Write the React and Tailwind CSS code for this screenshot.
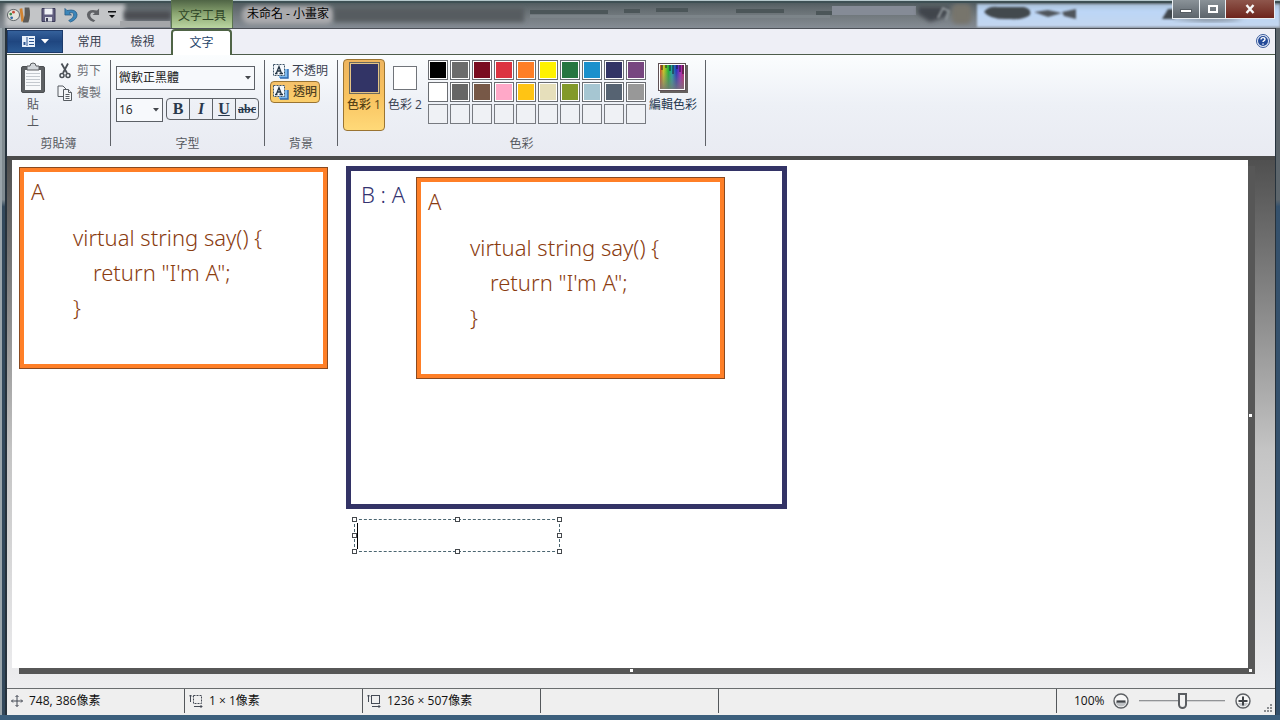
import React from "react";

const PALETTE = [
  { name: "黑色", fill: "bg-[#000000]" },
  { name: "深灰", fill: "bg-[#6b6b6b]" },
  { name: "深紅", fill: "bg-[#7a0c20]" },
  { name: "紅色", fill: "bg-[#dc3340]" },
  { name: "橙色", fill: "bg-[#ff7f27]" },
  { name: "黃色", fill: "bg-[#fff200]" },
  { name: "綠色", fill: "bg-[#27763f]" },
  { name: "青綠", fill: "bg-[#1a90cc]" },
  { name: "靛藍", fill: "bg-[#323466]" },
  { name: "紫色", fill: "bg-[#774680]" },
  { name: "白色", fill: "bg-[#ffffff]" },
  { name: "灰色", fill: "bg-[#666666]" },
  { name: "棕色", fill: "bg-[#775847]" },
  { name: "玫瑰", fill: "bg-[#ffa8c8]" },
  { name: "金色", fill: "bg-[#ffc414]" },
  { name: "淺黃", fill: "bg-[#e6dfbb]" },
  { name: "萊姆", fill: "bg-[#82992a]" },
  { name: "淺青", fill: "bg-[#a6c6d2]" },
  { name: "藍灰", fill: "bg-[#566372]" },
  { name: "淡紫", fill: "bg-[#989898]" },
];

function Group({ label, className, children }) {
  return (
    <section
      aria-label={label}
      className={"flex h-[86px] flex-col border-r border-[#5f6268] " + className}
    >
      <div className="flex h-[76px] flex-none">{children}</div>
      <div className="h-4 flex-none text-center text-xs leading-4 text-[#55585e]">{label}</div>
    </section>
  );
}

function Chevron() {
  return (
    <svg viewBox="0 0 6 4" className="pointer-events-none absolute right-1 top-1/2 h-1 w-1.5 -translate-y-1/2" fill="#44474c">
      <path d="M0 0h6L3 3.6z" />
    </svg>
  );
}

function TextBackIcon() {
  return (
    <svg viewBox="0 0 17 16" className="h-4 w-[17px] flex-none">
      <path d="M9 6h7v9H7v-3z" fill="#7db9ee" />
      <path d="M8 15h8V6" fill="none" stroke="#2a66ad" strokeWidth="1.4" />
      <rect x="1.500" y="1.500" width="11" height="11" fill="#f4f8fc" stroke="#3f5568" strokeDasharray="2 1" />
      <path d="M3 10.500h2.500M7.500 10.500H11M4.300 10.500L7 3.500l2.500 7M5.400 8h3.200" fill="none" stroke="#253646" strokeWidth="1.300" />
    </svg>
  );
}

function TitleBackdrop() {
  return (
    <svg aria-hidden="true" viewBox="0 0 1280 28" preserveAspectRatio="none" className="absolute inset-0 h-full w-full">
      <defs>
        <filter id="soft" x="-20%" y="-50%" width="140%" height="200%">
          <feGaussianBlur stdDeviation="2" />
        </filter>
        <filter id="faint" x="-10%" y="-30%" width="120%" height="160%">
          <feGaussianBlur stdDeviation="0.8" />
        </filter>
        <linearGradient id="glass" x1="0" y1="0" x2="0" y2="1">
          <stop offset="0" stopColor="#475458" />
          <stop offset="0.25" stopColor="#5f686c" />
          <stop offset="0.6" stopColor="#747b80" />
          <stop offset="1" stopColor="#858c94" />
        </linearGradient>
        <linearGradient id="sky" x1="0" y1="0" x2="0" y2="1">
          <stop offset="0" stopColor="#a9bfd6" />
          <stop offset="0.3" stopColor="#bcd6f6" />
          <stop offset="1" stopColor="#c3d6ef" />
        </linearGradient>
      </defs>
      <rect width="1280" height="28" fill="url(#glass)" />
      <rect x="5" y="4" width="120" height="23" fill="#c3c5c7" filter="url(#soft)" />
      <rect x="124" y="11" width="47" height="9" fill="#4b4d53" filter="url(#soft)" />
      <rect x="120" y="21" width="50" height="6" fill="#a4a6a9" />
      <rect x="242" y="6" width="92" height="18" rx="8" fill="#aaaaad" filter="url(#soft)" />
      <rect x="334" y="8" width="190" height="14" fill="#575c61" filter="url(#soft)" />
      <g fill="#4c5659">
        <rect x="530" y="10" width="78" height="4" />
        <rect x="624" y="9" width="16" height="4" />
        <rect x="656" y="8" width="32" height="4" />
        <rect x="736" y="9" width="48" height="4" />
        <rect x="816" y="11" width="16" height="4" />
      </g>
      <rect x="832" y="6" width="84" height="9" fill="#858b96" />
      <rect x="530" y="15" width="300" height="3" fill="#7c8489" />
      <path d="M918 7h32l-5 10-15 5-12-8z" fill="#40454b" filter="url(#soft)" />
      <path d="M938 18l5-10 6 3-3 9" fill="none" stroke="#91989c" strokeWidth="2" filter="url(#faint)" />
      <rect x="977" y="4" width="303" height="23" fill="url(#sky)" filter="url(#faint)" />
      <rect x="952" y="4" width="19" height="20" rx="5" fill="#77746c" filter="url(#soft)" />
      <g filter="url(#faint)">
        <path d="M984 12q4-6 14-5h26q8 2 6 8-6 5-20 4-20 1-26-7z" fill="#43484e" />
        <path d="M1034 12l14-2 14 3-14 4zM1062 12l14-3v10l-12-3z" fill="#50555b" />
        <path d="M1162 19l6-10h7v10z" fill="#41474e" />
      </g>
      <path d="M1174 18h70q-20 6-70 1z" fill="#717982" filter="url(#soft)" />
      <rect width="1280" height="3" fill="#3e5054" />
      <rect width="1280" height="1" fill="#b5c7cb" />
    </svg>
  );
}

function TitleBar() {
  return (
    <header className="relative flex h-7 flex-none items-stretch">
      <TitleBackdrop />
      <div className="relative flex w-[171px] flex-none items-center gap-2 pl-[7px] pt-0.5">
        <svg viewBox="0 0 28 20" className="h-5 w-[26px]">
          <ellipse cx="7" cy="10" rx="6.500" ry="6" fill="#e3e4dc" stroke="#555c60" />
          <circle cx="4" cy="9" r="1.500" fill="#3a8c4a" />
          <circle cx="7" cy="7" r="1.500" fill="#c74a35" />
          <circle cx="5" cy="13" r="1.500" fill="#336ba8" />
          <path d="M15 3l2 14" stroke="#d18330" strokeWidth="3" />
          <path d="M19 2h5q2 8-1 16h-6q3-8 2-16z" fill="#5b5a58" />
        </svg>
        <button aria-label="儲存" className="h-4 w-[15px]">
          <svg viewBox="0 0 15 15" className="h-4 w-[15px]">
            <path d="M1 1h13v13H1z" fill="#625f80" stroke="#3b3b58" />
            <path d="M3.500 1h8v6h-8z" fill="#f0f2f7" />
            <path d="M4 9.500h7V14H4z" fill="#d9dce4" />
            <path d="M5 10.500h2V14H5z" fill="#3f4058" />
          </svg>
        </button>
        <button aria-label="復原" className="h-4 w-[14px]">
          <svg viewBox="0 0 15 16" className="h-4 w-[14px]">
            <path d="M1 1v7h7L5.500 5.800Q10 4.500 10.500 8 10.500 11.500 5 14l2 1.500Q14 13 14 7.500 13 1 3.200 3.200z" fill="#3c86ba" stroke="#255a83" strokeWidth=".8" />
          </svg>
        </button>
        <button aria-label="重做" className="h-4 w-[14px]">
          <svg viewBox="0 0 15 16" className="h-4 w-[14px]">
            <path d="M14 1v7H7l2.500-2.200Q5 4.500 4.500 8 4.500 11.500 10 14l-2 1.500Q1 13 1 7.500 2 1 11.800 3.200z" fill="#606266" />
          </svg>
        </button>
        <button aria-label="自訂快速存取工具列" className="h-4 w-2">
          <svg viewBox="0 0 8 8" className="h-2 w-2">
            <path d="M0 0h8v1.500H0zM1 4h6L4 7z" fill="#101214" />
          </svg>
        </button>
      </div>
      <div className="relative flex w-[62px] flex-none items-center justify-center border-x border-[#5b7450] bg-linear-to-b from-[#4f6445] via-[#8da873] to-[#bbd6a2] pt-1 text-xs text-[#2f4527]">
        文字工具
      </div>
      <h1 className="relative flex flex-1 items-center pl-3.5 text-xs text-black">未命名 - 小畫家</h1>
      <div className="relative mr-[5px] flex h-[19px] items-stretch border-x border-b border-[#e9eef2]">
        <button aria-label="最小化" className="flex w-[27px] items-center justify-center border-r border-[#e9eef2] bg-linear-to-b from-[#8a9298] to-[#5c646b] pt-1">
          <span className="h-1 w-3 border border-[#565d63] bg-white" />
        </button>
        <button aria-label="最大化" className="flex w-[26px] items-center justify-center border-r border-[#e9eef2] bg-linear-to-b from-[#8a9298] to-[#5c646b]">
          <span className="h-2 w-2.5 border-2 border-white" />
        </button>
        <button aria-label="關閉" className="flex w-[48px] items-center justify-center bg-linear-to-b from-[#8e564c] to-[#6d241c]">
          <svg viewBox="0 0 12 10" className="h-2.5 w-3">
            <path d="M2.500 1l7 8M9.500 1l-7 8" stroke="#f7f7f7" strokeWidth="2.400" />
          </svg>
        </button>
      </div>
    </header>
  );
}

function TabRow() {
  return (
    <nav className="flex h-[27px] flex-none items-stretch border-t border-[#4c5058] bg-[#eeeff6] text-xs text-[#3a4150] shadow-[inset_0_-1px_0_#4d5c4b]">
      <button aria-label="檔案" className="mb-0.5 mt-px flex w-14 items-center justify-center gap-1.5 border border-[#1c3a6b] bg-linear-to-b from-[#35619b] via-[#1f4680] to-[#2b5a94]">
        <svg viewBox="0 0 13 11" className="h-[11px] w-[13px]">
          <path d="M0 0h13v11H0z" fill="#e8f0fa" />
          <path d="M5 1v9M7 2.500h5M7 5.500h5M7 8.500h5" stroke="#2c5590" />
          <path d="M1.500 6h2v3h-2z" fill="#2c5590" />
        </svg>
        <svg viewBox="0 0 8 5" className="h-[5px] w-2">
          <path d="M0 0h8L4 4.500z" fill="#fff" />
        </svg>
      </button>
      <button className="w-[53px]">常用</button>
      <button className="w-[53px]">檢視</button>
      <button className="ml-0.5 w-[61px] rounded-t-sm border-x-2 border-t-2 border-[#4f6446] bg-white text-[#26456b]">文字</button>
      <button aria-label="說明" className="ml-auto mr-[5px] pb-0.5">
        <svg viewBox="0 0 14 14" className="size-3.5">
          <circle cx="7" cy="7" r="6.500" fill="#e8eefa" stroke="#3a5b9b" />
          <circle cx="7" cy="7" r="5" fill="#234a98" />
          <path d="M5 5.600q0-2 2-2t2 1.700q0 1-1.200 1.600-.8.500-.8 1.200M7 9.400v1.400" fill="none" stroke="#fff" strokeWidth="1.400" />
        </svg>
      </button>
    </nav>
  );
}

function Ribbon() {
  return (
    <div className="flex h-[101px] flex-none items-start bg-linear-to-b from-[#fbfdfe] via-[#edf0f6] to-[#e9ebf2] pt-[5px] text-xs text-[#3a4150]">
      <Group label="剪貼簿" className="w-[104px]">
        <button className="ml-3 flex w-7 flex-col items-center pt-0.5 leading-[17px] text-[#55585e]">
          <svg viewBox="0 0 26 32" className="mb-0.5 h-8 w-[26px]">
            <rect x="1.500" y="4.500" width="23" height="26" rx="1.500" fill="#5d6063" stroke="#4c4f52" />
            <path d="M5 8h16v20H5z" fill="#f7f9fb" />
            <path d="M6 11.500h14M6 14.500h14M6 17.500h14M6 20.500h14M6 23.500h14" stroke="#c4c9cf" />
            <path d="M7 8V4h3q0-3 3-3t3 3h3v4z" fill="#d3d7db" stroke="#5a5d60" />
          </svg>
          <span>貼</span>
          <span>上</span>
        </button>
        <div className="ml-2.5 flex flex-col">
          <button className="flex h-[22px] items-center gap-1 text-[#6d7076]">
            <svg viewBox="0 0 16 16" className="size-4">
              <path d="M4.500 0.500L10 10M11 0.500L6 10" stroke="#4b5157" strokeWidth="1.800" />
              <circle cx="5" cy="12.500" r="2" fill="none" stroke="#4b5157" strokeWidth="1.500" />
              <circle cx="11" cy="12.500" r="2" fill="none" stroke="#4b5157" strokeWidth="1.500" />
            </svg>
            剪下
          </button>
          <button className="flex h-[22px] items-center gap-1 text-[#6d7076]">
            <svg viewBox="0 0 16 16" className="size-4" fill="#f3f5f8" stroke="#565b61">
              <path d="M1 1h5l3 3v7.500H1z" />
              <path d="M6.500 4.500h5l3 3v8h-8z" />
              <path d="M11.500 4.500v3h3M8.500 9.500h4M8.500 11.500h4M8.500 13.500h4" />
            </svg>
            複製
          </button>
        </div>
      </Group>

      <Group label="字型" className="w-[154px]">
        <div className="flex flex-col gap-2 pl-[5px] pt-1.5">
          <div className="relative h-6 w-[139px]">
            <select aria-label="字型" className="block h-6 w-full appearance-none border border-[#5d6167] bg-[#f7f9fc] py-0 pl-0.5 text-xs leading-[22px] text-[#222]">
              <option>微軟正黑體</option>
            </select>
            <Chevron />
          </div>
          <div className="flex gap-[3px]">
            <div className="relative h-6 w-[47px]">
              <select aria-label="字型大小" className="block h-6 w-full appearance-none border border-[#5d6167] bg-[#f7f9fc] py-0 pl-0.5 text-xs leading-[22px] text-[#222]">
                <option>16</option>
              </select>
              <Chevron />
            </div>
            <div className="flex h-[22px] w-[93px] divide-x divide-[#5d6167] rounded-sm border border-[#5d6167] font-['Liberation_Serif',serif] text-base font-bold leading-5 text-[#28384c]">
              <button aria-label="粗體" className="flex-1">B</button>
              <button aria-label="斜體" className="flex-1 italic">I</button>
              <button aria-label="底線" className="flex-1 underline">U</button>
              <button aria-label="刪除線" className="flex-1 text-xs leading-5 line-through">abc</button>
            </div>
          </div>
        </div>
      </Group>

      <Group label="背景" className="w-[73px]">
        <div className="flex flex-col items-start pl-[5px] pt-px">
          <button className="flex h-5 items-center gap-[3px] whitespace-nowrap pl-0.5">
            <TextBackIcon />
            不透明
          </button>
          <button className="flex h-[22px] w-[50px] items-center gap-0.5 whitespace-nowrap rounded-sm border border-[#9a7432] bg-linear-to-b from-[#f5c16a] to-[#fbcf6c] pl-px font-medium text-[#4f4222]">
            <TextBackIcon />
            <span className="flex-1">透明</span>
          </button>
        </div>
      </Group>

      <Group label="色彩" className="w-[368px]">
        <button className="-mt-px ml-[5px] flex h-[72px] w-[42px] flex-col items-center gap-[3px] rounded-sm border border-[#9a7432] bg-linear-to-b from-[#eeb55f] via-[#f8c25f] to-[#ffd978] pt-0.5 font-medium leading-4 text-[#574315]">
          <span className="h-8 w-[31px] border border-[#6d6a5c] bg-[#323466] shadow-[inset_0_0_0_1px_#e4c384]" />
          <span className="whitespace-nowrap">色彩 1</span>
        </button>
        <button className="ml-0.5 flex w-9 flex-col items-center gap-[7px] pt-1.5 leading-4">
          <span className="h-6 w-6 border border-[#70747a] bg-white" />
          <span className="whitespace-nowrap">色彩 2</span>
        </button>
        <div className="ml-[5px] grid h-[64px] grid-cols-[repeat(10,20px)] grid-rows-[repeat(3,20px)] gap-0.5">
          {PALETTE.map((c) => (
            <button key={c.name} aria-label={c.name} className="border border-[#6a6d72] bg-white p-px">
              <span className={"block h-full w-full " + c.fill} />
            </button>
          ))}
          {Array.from({ length: 10 }, (_, i) => (
            <button key={i} aria-label={"自訂色彩 " + (i + 1)} className="border border-[#777a80] bg-[#eff1f5]" />
          ))}
        </div>
        <button className="ml-[3px] flex w-12 flex-col items-center gap-0.5 pt-0.5 leading-4 text-[#26384f]">
          <svg viewBox="0 0 30 30" className="mb-px h-8 w-[30px]">
            <defs>
              <linearGradient id="hue">
                <stop offset="0" stopColor="#c94b2b" />
                <stop offset="0.15" stopColor="#c9c928" />
                <stop offset="0.35" stopColor="#21b13b" />
                <stop offset="0.5" stopColor="#1fa8a8" />
                <stop offset="0.68" stopColor="#2335c0" />
                <stop offset="0.85" stopColor="#a826c2" />
                <stop offset="1" stopColor="#c02463" />
              </linearGradient>
              <linearGradient id="fade" x2="0" y2="1">
                <stop offset="0.2" stopColor="#808080" stopOpacity="0" />
                <stop offset="1" stopColor="#777" stopOpacity=".85" />
              </linearGradient>
            </defs>
            <rect x="2" y="2" width="28" height="28" fill="#66615f" />
            <rect x=".5" y=".5" width="27" height="27" fill="#fff" stroke="#5d5054" />
            <rect x="2" y="2" width="24" height="24" fill="url(#hue)" />
            <rect x="2" y="2" width="24" height="24" fill="url(#fade)" />
            <path d="M4 2v5M8 2v3M12 2v6M15 2v9M19 2v4M22 2v7M25 2v9" stroke="#1b1d28" />
          </svg>
          <span className="whitespace-nowrap">編輯色彩</span>
        </button>
      </Group>
    </div>
  );
}

function ClassBox({ className }) {
  return (
    <div className={"absolute h-[202px] w-[309px] border-5 border-[#ff7f27] pl-[7px] pt-0.5 text-[22px] leading-[35px] text-[#8a3c10] outline-1 -outline-offset-1 outline-[#8a4a20] " + className}>
      <p>A</p>
      <pre className="ml-[42px] mt-[11px] font-['Noto_Sans',sans-serif]">
        {'virtual string say() {\n'}
        <span className="pl-5">{'return "I\'m A";'}</span>
        {'\n}'}
      </pre>
    </div>
  );
}

function Handle({ className }) {
  return <span className={"absolute size-[5px] border border-[#45494d] bg-white " + className} />;
}

function Canvas() {
  return (
    <main className="relative flex min-h-[531px] flex-1 border-t-4 border-[#4b4b4b] bg-linear-to-b from-[#505050] via-[#c4c4c4] via-55% to-[#eeeef0] pb-5 pl-[5px] pr-[27px]">
      <div className="relative flex-1 bg-white font-['Noto_Sans',sans-serif] font-light shadow-[7px_6px_0_#575757]">
        <ClassBox className="left-[7px] top-[7px]" />
        <div className="absolute left-[334px] top-1.5 h-[343px] w-[441px] border-5 border-[#333366] pl-2.5 pt-1.5 text-[22px] leading-[35px] text-[#333370]">
          B : A
          <ClassBox className="left-[65px] top-1.5" />
        </div>
        <div className="absolute left-[342px] top-[359px] h-[33px] w-[206px]">
          <textarea
            aria-label="文字方塊"
            className="block h-full w-full resize-none border border-dashed border-[#4a6570] bg-transparent p-1 text-[22px] leading-6 outline-none"
          />
          <span className="absolute left-[3px] top-1 h-[26px] w-px bg-black" />
          <Handle className="-left-0.5 -top-0.5" />
          <Handle className="-top-0.5 left-[101px]" />
          <Handle className="-right-0.5 -top-0.5" />
          <Handle className="-left-0.5 top-3.5" />
          <Handle className="-right-0.5 top-3.5" />
          <Handle className="-bottom-0.5 -left-0.5" />
          <Handle className="-bottom-0.5 left-[101px]" />
          <Handle className="-bottom-0.5 -right-0.5" />
        </div>
        <span className="absolute -right-1 top-1/2 size-[3px] bg-white" />
        <span className="absolute -bottom-1 left-1/2 size-[3px] bg-white" />
        <span className="absolute -bottom-1 -right-1 size-[3px] bg-white" />
      </div>
    </main>
  );
}

function StatusCell({ icon, children, className = "w-[178px]" }) {
  return (
    <div className={"flex items-center gap-1.5 border-r border-[#54575b] pl-1 " + className}>
      {icon}
      {children}
    </div>
  );
}

function StatusBar() {
  return (
    <footer className="flex h-[27px] flex-none items-stretch border-t border-[#6a6d70] bg-[#efefef] pb-0.5 text-xs text-[#111]">
      <StatusCell
        icon={
          <svg viewBox="0 0 12 12" className="size-3" fill="none" stroke="#444a55">
            <path d="M6 .5v11M.5 6h11M4.500 2L6 .5 7.500 2M4.500 10L6 11.500 7.500 10M2 4.500L.5 6 2 7.500M10 4.500L11.500 6 10 7.500" />
          </svg>
        }
      >
        748, 386像素
      </StatusCell>
      <StatusCell
        icon={
          <svg viewBox="0 0 14 14" className="size-3.5" fill="none" stroke="#444a55">
            <path d="M1.500 1v7M0 2.500L1.500 1 3 2.500M5 12.500h8M11.500 11l1.500 1.500-1.500 1.500" />
            <rect x="4.500" y="1.500" width="8" height="8" strokeDasharray="2 1" />
          </svg>
        }
      >
        1 × 1像素
      </StatusCell>
      <StatusCell
        icon={
          <svg viewBox="0 0 14 14" className="size-3.5" fill="none" stroke="#444a55">
            <path d="M1.500 1v7M0 2.500L1.500 1 3 2.500M5 12.500h8M11.500 11l1.500 1.500-1.500 1.500" />
            <rect x="4.500" y="1.500" width="8" height="8" />
          </svg>
        }
      >
        1236 × 507像素
      </StatusCell>
      <StatusCell />
      <StatusCell className="flex-1" />
      <div className="flex items-center pl-[17px]">
        <label htmlFor="zoom" className="w-[39px]">100%</label>
        <button aria-label="縮小">
          <svg viewBox="0 0 16 16" className="size-4">
            <circle cx="8" cy="8" r="7" fill="#f7f7f7" stroke="#5d6064" strokeWidth="1.400" />
            <path d="M2.500 9h11q-1.500 4.500-5.500 4.500T2.500 9z" fill="#bfc2c5" />
            <path d="M3.500 8.500h9" stroke="#3f4246" strokeWidth="2.200" />
          </svg>
        </button>
        <input
          id="zoom"
          type="range"
          min="0"
          max="100"
          defaultValue="50"
          className="mx-2.5 h-4 w-[86px] appearance-none bg-linear-to-b from-transparent from-44% via-[#74777b] via-44% to-transparent to-56% [&::-webkit-slider-thumb]:h-4 [&::-webkit-slider-thumb]:w-[9px] [&::-webkit-slider-thumb]:appearance-none [&::-webkit-slider-thumb]:rounded-b-full [&::-webkit-slider-thumb]:rounded-t-sm [&::-webkit-slider-thumb]:border-2 [&::-webkit-slider-thumb]:border-[#5a5d61] [&::-webkit-slider-thumb]:bg-[#f2f2f2]"
        />
        <button aria-label="放大">
          <svg viewBox="0 0 16 16" className="size-4">
            <circle cx="8" cy="8" r="7" fill="#f7f7f7" stroke="#5d6064" strokeWidth="1.400" />
            <path d="M3 10h10q-1.500 3.500-5 3.500T3 10z" fill="#c6c9cc" />
            <path d="M3.500 8h9M8 3.500v9" stroke="#3f4246" strokeWidth="2" />
          </svg>
        </button>
        <svg viewBox="0 0 10 10" className="ml-3 mr-0.5 size-2.5 self-end" fill="#8b8e91">
          <path d="M7 1h2v2H7zM4 4h2v2H4zM7 4h2v2H7zM1 7h2v2H1zM4 7h2v2H4zM7 7h2v2H7z" />
        </svg>
      </div>
    </footer>
  );
}

export default function App() {
  return (
    <div className="flex min-h-screen flex-col bg-[#3c5f7c] font-['Open_Sans','Noto_Sans_CJK_TC',sans-serif]">
      <TitleBar />
      <div className="flex flex-1 items-stretch border-b-5 border-[#3c5f7c]">
        <div className="w-[7px] flex-none border-x-2 border-l-[#9aa5ab] border-r-[#26323c] bg-linear-to-b from-[#7f8a90] from-25% to-[#33495c] to-26%" />
        <div className="flex min-w-0 flex-1 flex-col">
          <TabRow />
          <Ribbon />
          <Canvas />
          <StatusBar />
        </div>
        <div className="w-[5px] flex-none border-l border-l-[#26323c] bg-linear-to-b from-[#5c656b] from-25% to-[#35516c] to-26%" />
      </div>
    </div>
  );
}
